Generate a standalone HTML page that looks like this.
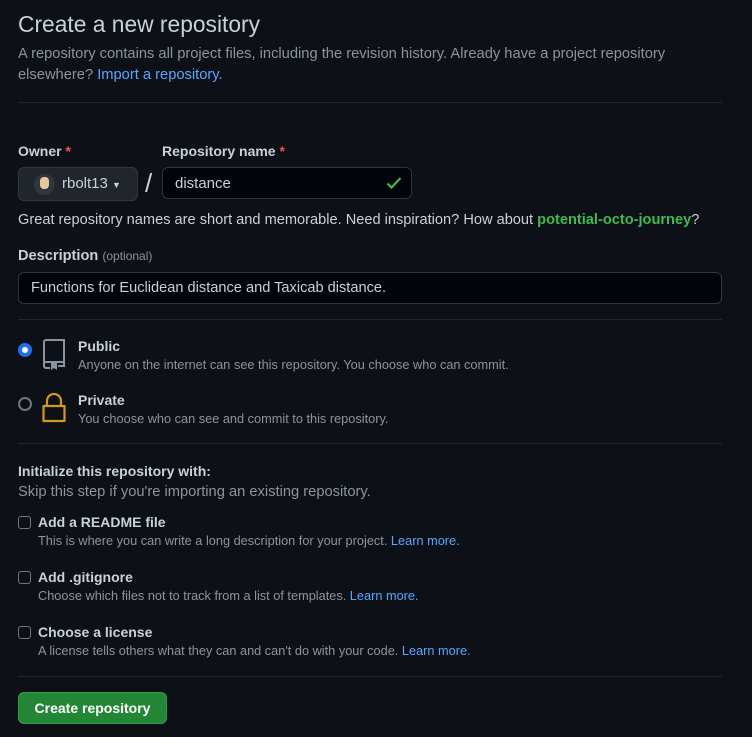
<!DOCTYPE html>
<html><head><meta charset="utf-8"><style>
*{box-sizing:border-box;margin:0;padding:0}
body{width:752px;height:737px;background:#0d1117;color:#c9d1d9;font-family:"Liberation Sans",sans-serif;font-size:14.6px;position:relative;overflow:hidden}
.a{position:absolute;white-space:nowrap}
.m{color:#8b949e}
.l{color:#58a6ff}
.hr{position:absolute;left:18px;width:704px;height:1px;background:#21262d}
b{font-weight:bold}
.inp{position:absolute;background:#010409;border:1px solid #30363d;border-radius:6px}
.cb{position:absolute;left:18px;width:13px;height:13px;border:1px solid #6e7681;border-radius:3px;background:#0d1117}
.t{font-weight:bold;color:#c9d1d9;font-size:14px}
.s{font-size:12.75px;color:#8b949e}
</style></head><body>
<div class="a" style="left:18px;top:11px;font-size:22.8px;color:#c9d1d9">Create a new repository</div>
<div class="a m" style="left:18px;top:46px;font-size:14.7px">A repository contains all project files, including the revision history. Already have a project repository</div>
<div class="a m" style="left:18px;top:67px;font-size:14.7px">elsewhere? <span class="l">Import a repository.</span></div>
<div class="hr" style="top:102px"></div>

<div class="a t" style="left:18px;top:143px">Owner <span style="color:#f85149">*</span></div>
<div class="a t" style="left:162px;top:143px">Repository name <span style="color:#f85149">*</span></div>
<div class="a" style="left:18px;top:167px;width:120px;height:34px;background:#21262d;border:1px solid #30363d;border-radius:6px"></div>
<div class="a" style="left:34px;top:174px;width:21px;height:21px;border-radius:50%;background:#30363d"></div>
<div class="a" style="left:40px;top:177px;width:9px;height:12px;border-radius:4px;background:#e8c89a"></div>
<div class="a" style="left:62px;top:175px;font-size:15px">rbolt13 <span style="font-size:9px">▼</span></div>
<div class="a" style="left:145px;top:168px;font-size:26px;color:#c9d1d9">/</div>
<div class="inp" style="left:162px;top:167px;width:250px;height:32px"></div>
<div class="a" style="left:175px;top:175px;font-size:15px">distance</div>
<svg class="a" style="left:386px;top:176px" width="16" height="14" viewBox="0 0 16 14"><path d="M1.5 7.5l4 4 9-9.5" fill="none" stroke="#3fb950" stroke-width="2.2"/></svg>
<div class="a" style="left:18px;top:212px">Great repository names are short and memorable. Need inspiration? How about <b style="color:#3fb950">potential-octo-journey</b>?</div>

<div class="a" style="left:18px;top:248px"><b>Description</b> <span class="s" style="font-size:12px">(optional)</span></div>
<div class="inp" style="left:18px;top:272px;width:704px;height:32px"></div>
<div class="a" style="left:31px;top:280px">Functions for Euclidean distance and Taxicab distance.</div>
<div class="hr" style="top:319px"></div>

<div class="a" style="left:18px;top:343px;width:14px;height:14px;border-radius:50%;background:#fff;border:4px solid #1f6feb"></div>
<svg class="a" style="left:41px;top:338px" width="26" height="32" viewBox="0 0 26 32"><path d="M3 26V4a2 2 0 0 1 2-2h18v22H5a2 2 0 0 0-2 2v2a2 2 0 0 0 2 2h4M17 28h6v-4" fill="none" stroke="#8b949e" stroke-width="2"/><path d="M10 25h6v7l-3-2-3 2z" fill="#8b949e"/></svg>
<div class="a t" style="left:78px;top:338px">Public</div>
<div class="a s" style="left:78px;top:357px">Anyone on the internet can see this repository. You choose who can commit.</div>
<div class="a" style="left:18px;top:397px;width:14px;height:14px;border-radius:50%;background:#0d1117;border:2px solid #6e7681"></div>
<svg class="a" style="left:41px;top:391px" width="26" height="32" viewBox="0 0 26 32"><path d="M6 15V10a7 7 0 0 1 14 0v5M2.5 15h21v15h-21z" fill="none" stroke="#d29922" stroke-width="2.2" stroke-linejoin="round"/></svg>
<div class="a t" style="left:78px;top:392px">Private</div>
<div class="a s" style="left:78px;top:411px">You choose who can see and commit to this repository.</div>
<div class="hr" style="top:443px"></div>

<div class="a t" style="left:18px;top:463px">Initialize this repository with:</div>
<div class="a m" style="left:18px;top:484px;font-size:14.7px">Skip this step if you're importing an existing repository.</div>

<div class="cb" style="top:516px"></div>
<div class="a t" style="left:38px;top:514px">Add a README file</div>
<div class="a s" style="left:38px;top:533px">This is where you can write a long description for your project. <span class="l">Learn more.</span></div>
<div class="cb" style="top:571px"></div>
<div class="a t" style="left:38px;top:569px">Add .gitignore</div>
<div class="a s" style="left:38px;top:588px">Choose which files not to track from a list of templates. <span class="l">Learn more.</span></div>
<div class="cb" style="top:626px"></div>
<div class="a t" style="left:38px;top:624px">Choose a license</div>
<div class="a s" style="left:38px;top:643px">A license tells others what they can and can't do with your code. <span class="l">Learn more.</span></div>
<div class="hr" style="top:676px"></div>

<div class="a" style="left:18px;top:692px;width:149px;height:32px;background:#238636;border:1px solid #2ea043;border-radius:6px;color:#fff;font-weight:bold;text-align:center;line-height:30px;font-size:14px">Create repository</div>
</body></html>
